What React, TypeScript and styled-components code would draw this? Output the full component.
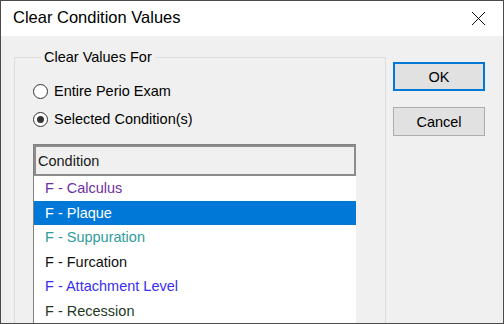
import styled, { createGlobalStyle } from 'styled-components';

const GlobalStyle = createGlobalStyle`
  html, body {
    margin: 0;
    padding: 0;
    background: #f0f0f0;
  }
  body {
    font-family: "Liberation Sans", Arial, sans-serif;
  }
`;

const Window = styled.div`
  width: 504px;
  height: 324px;
  box-sizing: border-box;
  border: 1px solid #4a4a4a;
  background: #f0f0f0;
  display: flex;
  flex-direction: column;
  overflow: hidden;
`;

const TitleBar = styled.div`
  height: 35px;
  flex: none;
  background: #fff;
  display: flex;
  align-items: center;
  justify-content: space-between;
  padding: 0 17px 0 12px;
`;

const Title = styled.div`
  font-size: 16.5px;
  color: #000;
  margin-top: -2px;
`;

const Content = styled.div`
  flex: 1;
  display: flex;
  align-items: flex-start;
  padding: 13px 0 0 13px;
  min-height: 0;
`;

const Group = styled.fieldset`
  margin: 0;
  padding: 0 0 0 18px;
  width: 372px;
  height: 300px;
  box-sizing: border-box;
  border: 1px solid #dcdcdc;
  flex: none;
`;

const Legend = styled.legend`
  margin-left: 8px;
  padding: 0 3px;
  font-size: 14.5px;
  line-height: 16px;
  color: #000;
`;

const RadioRow = styled.label`
  display: flex;
  align-items: center;
  height: 28px;
  font-size: 14.5px;
  color: #000;
  gap: 6px;
`;

const RadioCircle = styled.span<{ $checked?: boolean }>`
  width: 15px;
  height: 15px;
  box-sizing: border-box;
  border: 1px solid #333;
  border-radius: 50%;
  background: #fff;
  display: flex;
  align-items: center;
  justify-content: center;
  &::after {
    content: '';
    width: 7px;
    height: 7px;
    border-radius: 50%;
    background: ${({ $checked }) => ($checked ? '#333' : 'transparent')};
  }
`;

const Radios = styled.div`
  margin-top: 12px;
  display: flex;
  flex-direction: column;
`;

const List = styled.div`
  margin-top: 11px;
  width: 323px;
  box-sizing: border-box;
  border-left: 1px solid #828282;
  border-top: 1px solid #828282;
  background: #fff;
`;

const Header = styled.div`
  height: 31px;
  box-sizing: border-box;
  border: 2px solid #8c8c8c;
  background: #f0f0f0;
  display: flex;
  align-items: center;
  padding-left: 2px;
  font-size: 14.5px;
  color: #1a1a1a;
`;

const Row = styled.div<{ $color: string; $selected?: boolean }>`
  height: 24.5px;
  display: flex;
  align-items: center;
  padding-left: 11px;
  font-size: 14.5px;
  color: ${({ $selected, $color }) => ($selected ? '#fff' : $color)};
  background: ${({ $selected }) => ($selected ? '#0078d7' : '#fff')};
`;

const Buttons = styled.div`
  margin: 13px 0 0 7px;
  display: flex;
  flex-direction: column;
  gap: 16px;
`;

const Button = styled.button<{ $default?: boolean }>`
  width: 92px;
  height: 29px;
  box-sizing: border-box;
  background: #e1e1e1;
  border: ${({ $default }) => ($default ? '2px solid #0078d7' : '1px solid #adadad')};
  font-family: "Liberation Sans", Arial, sans-serif;
  font-size: 14.5px;
  color: #000;
  padding: 0;
`;

const conditions = [
  { name: 'F - Calculus', color: '#7030a0' },
  { name: 'F - Plaque', color: '#000', selected: true },
  { name: 'F - Suppuration', color: '#2e9c9c' },
  { name: 'F - Furcation', color: '#111' },
  { name: 'F - Attachment Level', color: '#3a2ef0' },
  { name: 'F - Recession', color: '#1f3a1f' },
];

export default function App() {
  return (
    <>
      <GlobalStyle />
      <Window>
        <TitleBar>
          <Title>Clear Condition Values</Title>
          <svg width="15" height="15" viewBox="0 0 15 15">
            <path d="M1 1 L14 14 M14 1 L1 14" stroke="#111" strokeWidth="1" fill="none" />
          </svg>
        </TitleBar>
        <Content>
          <Group>
            <Legend>Clear Values For</Legend>
            <Radios>
              <RadioRow>
                <RadioCircle />
                Entire Perio Exam
              </RadioRow>
              <RadioRow>
                <RadioCircle $checked />
                Selected Condition(s)
              </RadioRow>
            </Radios>
            <List>
              <Header>Condition</Header>
              {conditions.map(c => (
                <Row key={c.name} $color={c.color} $selected={c.selected}>
                  {c.name}
                </Row>
              ))}
            </List>
          </Group>
          <Buttons>
            <Button $default>OK</Button>
            <Button>Cancel</Button>
          </Buttons>
        </Content>
      </Window>
    </>
  );
}
